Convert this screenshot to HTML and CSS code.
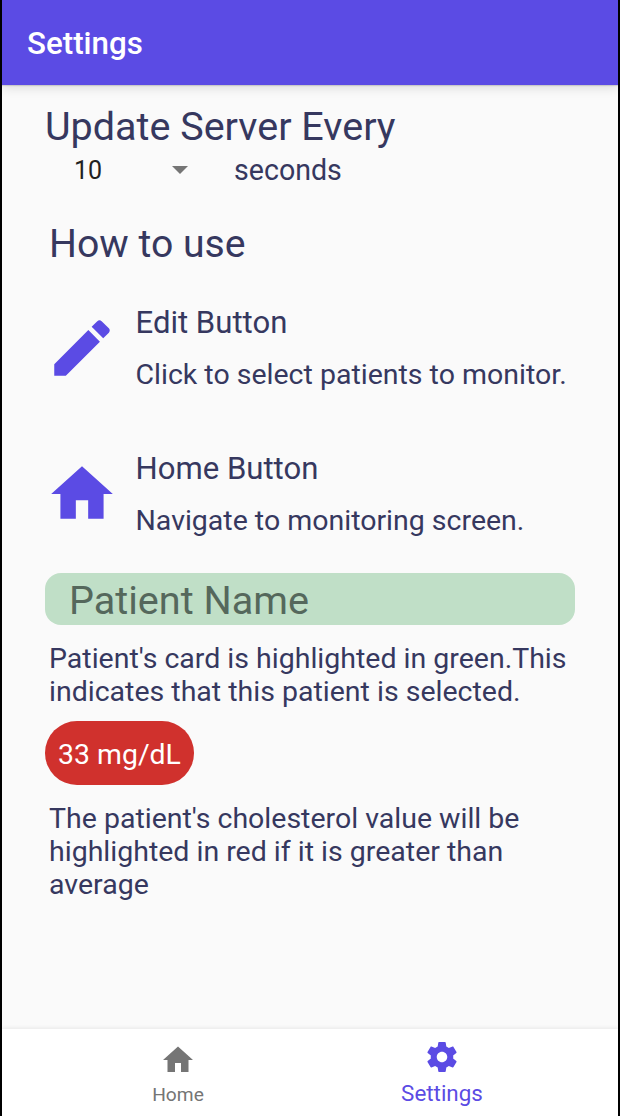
FILE: index.html
```html
<!DOCTYPE html>
<html lang="en">
<head>
<meta charset="utf-8">
<title>Settings</title>
<link rel="stylesheet" href="styles.css">
</head>
<body>
<div class="app">
  <header class="app-bar"><h1 class="app-title">Settings</h1></header>
  <main class="content">
    <h2 class="heading">Update Server Every</h2>
    <div class="interval">
      <div class="spinner"><span class="spinner-value">10</span><span class="caret"></span></div>
      <span class="unit">seconds</span>
    </div>
    <h2 class="heading how-heading">How to use</h2>
    <section class="guide">
      <svg class="guide-icon" viewBox="0 0 24 24"><path d="M3 17.25V21h3.75L17.81 9.94l-3.75-3.75L3 17.25zM20.71 7.04c.39-.39.39-1.02 0-1.41l-2.34-2.34c-.39-.39-1.02-.39-1.41 0l-1.83 1.83 3.75 3.75 1.83-1.83z"/></svg>
      <div class="guide-text"><h3 class="guide-title">Edit Button</h3><p class="guide-desc">Click to select patients to monitor.</p></div>
    </section>
    <section class="guide">
      <svg class="guide-icon" viewBox="0 0 24 24"><path d="M10 20v-6h4v6h5v-8h3L12 3 2 12h3v8z"/></svg>
      <div class="guide-text"><h3 class="guide-title">Home Button</h3><p class="guide-desc">Navigate to monitoring screen.</p></div>
    </section>
    <div class="patient-card">Patient Name</div>
    <p class="note">Patient's card is highlighted in green.This<br>indicates that this patient is selected.</p>
    <div class="reading">33 mg/dL</div>
    <p class="note">The patient's cholesterol value will be<br>highlighted in red if it is greater than<br>average</p>
  </main>
  <nav class="bottom-nav">
    <a class="nav-item"><svg class="nav-icon" viewBox="0 0 24 24"><path d="M10 20v-6h4v6h5v-8h3L12 3 2 12h3v8z"/></svg><span class="nav-label">Home</span></a>
    <a class="nav-item nav-active"><svg class="nav-icon" viewBox="0 0 24 24"><path d="M19.43 12.98c.04-.32.07-.64.07-.98s-.03-.66-.07-.98l2.11-1.65c.19-.15.24-.42.12-.64l-2-3.46c-.12-.22-.39-.3-.61-.22l-2.49 1c-.52-.4-1.08-.73-1.69-.98l-.38-2.65C14.46 2.18 14.25 2 14 2h-4c-.25 0-.46.18-.49.42l-.38 2.65c-.61.25-1.17.59-1.69.98l-2.49-1c-.23-.09-.49 0-.61.22l-2 3.46c-.13.22-.07.49.12.64l2.11 1.65c-.04.32-.07.65-.07.98s.03.66.07.98l-2.11 1.65c-.19.15-.24.42-.12.64l2 3.46c.12.22.39.3.61.22l2.49-1c.52.4 1.08.73 1.69.98l.38 2.65c.03.24.24.42.49.42h4c.25 0 .46-.18.49-.42l.38-2.65c.61-.25 1.17-.59 1.69-.98l2.49 1c.23.09.49 0 .61-.22l2-3.46c.12-.22.07-.49-.12-.64l-2.11-1.65zM12 15.5c-1.93 0-3.5-1.57-3.5-3.5s1.57-3.5 3.5-3.5 3.5 1.57 3.5 3.5-1.57 3.5-3.5 3.5z"/></svg><span class="nav-label">Settings</span></a>
  </nav>
</div>
</body>
</html>
```
FILE: styles.css
```css
* { box-sizing: border-box; }
body { margin: 0; background: #000; font-family: Roboto, "Liberation Sans", sans-serif; color: #36385f; }
h1, h2, h3, p { margin: 0; font-weight: 400; }
.app { display: flex; flex-direction: column; height: 1116px; margin: 0 2px; background: #fafafa; overflow: hidden; }
.app-bar { flex: none; display: flex; align-items: center; height: 85px; padding: 2px 25px 0; background: #5b4be4; box-shadow: 0 1px 1px rgba(0,0,0,.12), 0 3px 10px rgba(0,0,0,.12); }
.app-title { color: #fff; font-size: 31.3px; font-weight: 500; }
.content { flex: 1; padding: 19px 43px 0; }
.heading { font-size: 39.5px; line-height: 46px; }
.interval { display: flex; align-items: center; height: 41px; }
.spinner { display: flex; align-items: center; justify-content: space-between; width: 189px; padding: 0 46px 0 29px; color: #212121; font-size: 25px; }
.caret { margin-top: -2px; border: 8px solid transparent; border-top-color: #757575; border-bottom: 0; }
.unit { font-size: 28.6px; line-height: 32px; margin-top: -1px; }
.how-heading { margin: 30px 0 0 4px; font-size: 39.2px; }
.guide { display: flex; align-items: center; height: 146px; gap: 17px; }
.guide:first-of-type { margin-top: 8px; }
.guide-icon { flex: none; width: 74px; height: 74px; margin: -1px 0 0 -.5px; fill: #5b4be4; }
.guide-title { font-size: 31.1px; line-height: 36px; }
.guide-desc { margin-top: 17px; font-size: 28.5px; line-height: 34px; white-space: nowrap; }
.patient-card { height: 52px; margin-top: 6px; padding-left: 24px; border-radius: 16px; background: #c0dfc7; color: #55685c; font-size: 39.6px; line-height: 55px; }
.note { margin: 17px 0 0 4px; font-size: 28.5px; line-height: 33px; white-space: nowrap; }
.reading { width: 149px; height: 64px; margin-top: 13px; border-radius: 32px; background: #d0312d; color: #fff; font-size: 28.4px; line-height: 68px; text-align: center; }
.bottom-nav { flex: none; display: flex; justify-content: center; height: 87px; background: #fff; box-shadow: 0 -1px 4px rgba(0,0,0,.08); }
.nav-item { display: flex; flex-direction: column; align-items: center; width: 264px; padding-top: 13px; color: #757575; font-size: 19.2px; }
.nav-icon { width: 36px; height: 36px; fill: currentColor; }
.nav-label { line-height: 24px; margin-top: 5px; }
.nav-active { padding-top: 10px; color: #5b4be4; font-size: 22.4px; }
.nav-active .nav-label { margin-top: 6px; }
```
